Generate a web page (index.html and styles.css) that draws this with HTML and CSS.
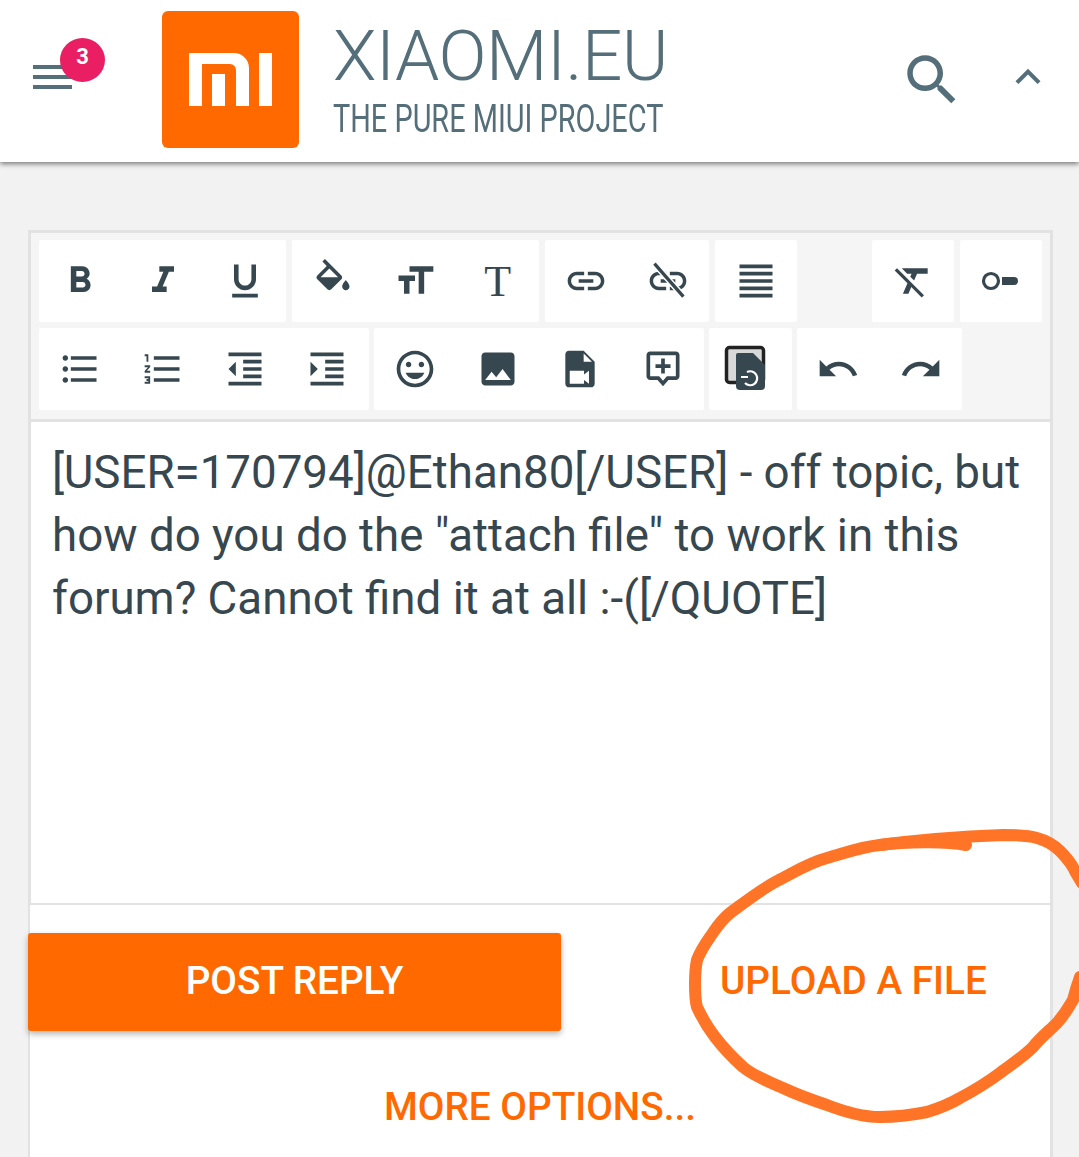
FILE: index.html
```html
<!doctype html>
<html>
    <head>
        <title>XIAOMI.EU</title>
        <meta charset="UTF-8">
        <link rel="stylesheet" href="styles.css">
    </head>

    <body>
        <!--Header Start-->
        <header class="header">
            <div class="menu">
                <span class="menu-line"></span>
                <span class="menu-line"></span>
                <span class="menu-line"></span>
                <span class="badge">3</span>
            </div>
            <svg class="logo" viewBox="0 0 137 137">
                <rect width="137" height="137" rx="6" fill="#ff6900"/>
                <path fill="#fff" d="M27 42h45a15 15 0 0 1 15 15v38H74V59a6 6 0 0 0-6-6H40v42H27zM50 63h13v32H50zM97 42h13v53H97z"/>
            </svg>
            <div class="brand">
                <div class="brand-name">XIAOMI.EU</div>
                <div class="brand-sub">THE PURE MIUI PROJECT</div>
            </div>
            <svg class="search" viewBox="0 0 24 24"><path d="M15.5 14h-.79l-.28-.27C15.41 12.59 16 11.11 16 9.5 16 5.91 13.09 3 9.5 3S3 5.91 3 9.5 5.91 16 9.5 16c1.61 0 3.09-.59 4.23-1.57l.27.28v.79l5 4.99L20.49 19l-4.99-5zm-6 0C7.01 14 5 11.99 5 9.5S7.01 5 9.5 5 14 7.01 14 9.5 11.99 14 9.5 14z"/></svg>
            <svg class="chevron" viewBox="0 0 24 24"><path d="M7.41 15.41L12 10.83l4.59 4.58L18 14l-6-6-6 6z"/></svg>
        </header>
        <!--Header End-->

        <!--Editor Start-->
        <section class="editor">
            <div class="toolbar">
                <div class="tool-row">
                    <div class="group">
                        <span class="tool"><svg viewBox="0 0 24 24"><path d="M15.6 10.79c.97-.67 1.65-1.77 1.65-2.79 0-2.26-1.75-4-4-4H7v14h7.04c2.09 0 3.71-1.7 3.71-3.79 0-1.52-.86-2.82-2.15-3.42zM10 6.5h3c.83 0 1.5.67 1.5 1.5s-.67 1.5-1.5 1.5h-3v-3zm3.5 9H10v-3h3.5c.83 0 1.5.67 1.5 1.5s-.67 1.5-1.5 1.5z"/></svg></span>
                        <span class="tool"><svg viewBox="0 0 24 24"><path d="M10 4v3h2.21l-3.42 8H6v3h8v-3h-2.21l3.42-8H18V4z"/></svg></span>
                        <span class="tool"><svg viewBox="0 0 24 24"><path d="M12 17c3.31 0 6-2.69 6-6V3h-2.5v8c0 1.93-1.57 3.5-3.5 3.5S8.5 12.93 8.5 11V3H6v8c0 3.31 2.69 6 6 6zm-7 2v2h14v-2H5z"/></svg></span>
                    </div>
                    <div class="group">
                        <span class="tool"><svg viewBox="0 0 24 24"><path d="M16.56 8.94L7.62 0 6.21 1.41l2.38 2.38-5.15 5.15c-.59.59-.59 1.54 0 2.12l5.5 5.5c.29.29.68.44 1.06.44s.77-.15 1.06-.44l5.5-5.5c.59-.58.59-1.53 0-2.12zM5.21 10L10 5.21 14.79 10H5.21zM19 11.5s-2 2.17-2 3.5c0 1.1.9 2 2 2s2-.9 2-2c0-1.33-2-3.5-2-3.5z"/></svg></span>
                        <span class="tool"><svg viewBox="0 0 24 24"><path d="M9 4v3h5v12h3V7h5V4H9zm-6 8h3v7h3v-7h3V9H3v3z"/></svg></span>
                        <span class="tool tool-serif">T</span>
                    </div>
                    <div class="group">
                        <span class="tool"><svg viewBox="0 0 24 24"><path d="M3.9 12c0-1.71 1.39-3.1 3.1-3.1h4V7H7c-2.76 0-5 2.24-5 5s2.24 5 5 5h4v-1.9H7c-1.71 0-3.1-1.39-3.1-3.1zM8 13h8v-2H8v2zm9-6h-4v1.9h4c1.71 0 3.1 1.39 3.1 3.1s-1.39 3.1-3.1 3.1h-4V17h4c2.76 0 5-2.24 5-5s-2.24-5-5-5z"/></svg></span>
                        <span class="tool"><svg viewBox="0 0 24 24"><path d="M3.9 12c0-1.71 1.39-3.1 3.1-3.1h4V7H7c-2.76 0-5 2.24-5 5s2.24 5 5 5h4v-1.9H7c-1.71 0-3.1-1.39-3.1-3.1zM8 13h8v-2H8v2zm9-6h-4v1.9h4c1.71 0 3.1 1.39 3.1 3.1s-1.39 3.1-3.1 3.1h-4V17h4c2.76 0 5-2.24 5-5s-2.24-5-5-5z"/><path fill="none" stroke="#fff" stroke-width="3.400" d="M4.600 2.500l15.800 18"/><path fill="none" stroke="#37474f" stroke-width="1.800" d="M4.600 2.500l15.800 18"/></svg></span>
                    </div>
                    <div class="group">
                        <span class="tool"><svg viewBox="0 0 24 24"><path d="M3 21h18v-2H3v2zm0-4h18v-2H3v2zm0-4h18v-2H3v2zm0-4h18V7H3v2zm0-6v2h18V3H3z"/></svg></span>
                    </div>
                    <div class="group group-push">
                        <span class="tool"><svg viewBox="0 0 24 24"><path d="M3.27 5L2 6.27l6.97 6.97L6.5 19h3l1.57-3.66L16.73 21 18 19.73 3.55 5.27 3.27 5zM6 5v.18L8.82 8h2.4l-.72 1.68 2.1 2.1L14.21 8H20V5H6z"/></svg></span>
                    </div>
                    <div class="group">
                        <span class="tool"><svg viewBox="0 0 44 44"><circle cx="12" cy="22" r="7.5" fill="none" stroke="#37474f" stroke-width="3.200"/><path d="M23 18h12a4 4 0 0 1 0 8H23z"/></svg></span>
                    </div>
                </div>
                <div class="tool-row">
                    <div class="group">
                        <span class="tool"><svg viewBox="0 0 24 24"><path d="M4 10.5c-.83 0-1.5.67-1.5 1.5s.67 1.5 1.5 1.5 1.5-.67 1.5-1.5-.67-1.5-1.5-1.5zm0-6c-.83 0-1.5.67-1.5 1.5S3.17 7.5 4 7.5 5.5 6.83 5.5 6 4.83 4.5 4 4.5zm0 12c-.83 0-1.5.68-1.5 1.5s.68 1.5 1.5 1.5 1.5-.68 1.5-1.5-.67-1.5-1.5-1.5zM7 19h14v-2H7v2zm0-6h14v-2H7v2zm0-8v2h14V5H7z"/></svg></span>
                        <span class="tool"><svg viewBox="0 0 24 24"><path d="M2 17h2v.5H3v1h1v.5H2v1h3v-4H2v1zm1-9h1V4H2v1h1v3zm-1 3h1.8L2 13.1v.9h3v-1H3.2L5 10.9V10H2v1zm5-6v2h14V5H7zm0 14h14v-2H7v2zm0-6h14v-2H7v2z"/></svg></span>
                        <span class="tool"><svg viewBox="0 0 24 24"><path d="M11 17h10v-2H11v2zm-8-5l4 4V8l-4 4zm0 9h18v-2H3v2zM3 3v2h18V3H3zm8 6h10V7H11v2zm0 4h10v-2H11v2z"/></svg></span>
                        <span class="tool"><svg viewBox="0 0 24 24"><path d="M3 21h18v-2H3v2zM3 8v8l4-4-4-4zm8 9h10v-2H11v2zM3 3v2h18V3H3zm8 6h10V7H11v2zm0 4h10v-2H11v2z"/></svg></span>
                    </div>
                    <div class="group">
                        <span class="tool"><svg viewBox="0 0 24 24"><path d="M11.99 2C6.47 2 2 6.48 2 12s4.47 10 9.99 10C17.52 22 22 17.52 22 12S17.52 2 11.99 2zM12 20c-4.42 0-8-3.58-8-8s3.58-8 8-8 8 3.58 8 8-3.58 8-8 8zm3.5-9c.83 0 1.5-.67 1.5-1.5S16.33 8 15.5 8 14 8.67 14 9.5s.67 1.5 1.5 1.5zm-7 0c.83 0 1.5-.67 1.5-1.5S9.33 8 8.5 8 7 8.67 7 9.5 7.67 11 8.5 11zm3.5 6.5c2.33 0 4.31-1.46 5.11-3.5H6.89c.8 2.04 2.78 3.5 5.11 3.5z"/></svg></span>
                        <span class="tool"><svg viewBox="0 0 24 24"><path d="M21 19V5c0-1.1-.9-2-2-2H5c-1.1 0-2 .9-2 2v14c0 1.1.9 2 2 2h14c1.1 0 2-.9 2-2zM8.5 13.5l2.5 3.01L14.5 12l4.5 6H5l3.5-4.5z"/></svg></span>
                        <span class="tool"><svg viewBox="0 0 24 24"><path d="M6 2c-1.1 0-2 .9-2 2v16c0 1.1.9 2 2 2h12c1.1 0 2-.9 2-2V8l-6-6H6zm8 1.5L18.5 8H14z"/><path fill="#fff" d="M6.4 13h7.8v2l2.7-2v7l-2.7-2v2H6.4z"/></svg></span>
                        <span class="tool"><svg viewBox="0 0 24 24"><path d="M5 2.5h14c1.1 0 2 .9 2 2V16c0 1.1-.9 2-2 2h-4l-3 3.4L9 18H5c-1.1 0-2-.9-2-2V4.500c0-1.100.9-2 2-2zm0 2V16h4.900l2.100 2.400 2.100-2.400H19V4.500zM11 6.300h2v3.100h3.100v2H13v3.100h-2v-3.100H7.900v-2H11z"/></svg></span>
                    </div>
                    <div class="group">
                        <span class="tool"><svg class="tool-stack" viewBox="0 0 44 44"><rect class="tool-ghost" x="-2.500" y="0.500" width="37" height="35" rx="3"/><path d="M9 6h15l12 12v21a4 4 0 0 1-4 4H11a4 4 0 0 1-4-4V8a2 2 0 0 1 2-2z"/><path fill="none" stroke="#fff" stroke-width="2.200" d="M12 30h7M18 25a7 7 0 1 1-2 11"/></svg></span>
                    </div>
                    <div class="group">
                        <span class="tool"><svg viewBox="0 0 24 24"><path d="M12.500 8c-2.650 0-5.050.99-6.900 2.600L2 7v9h9l-3.620-3.620c1.390-1.160 3.160-1.880 5.120-1.880 3.540 0 6.550 2.310 7.600 5.500l2.370-.78C21.080 11.030 17.150 8 12.500 8z"/></svg></span>
                        <span class="tool"><svg viewBox="0 0 24 24"><path d="M18.400 10.600C16.550 8.990 14.150 8 11.500 8c-4.650 0-8.580 3.030-9.960 7.220L3.900 16c1.050-3.190 4.050-5.500 7.600-5.500 1.950 0 3.730.72 5.120 1.880L13 16h9V7l-3.600 3.600z"/></svg></span>
                    </div>
                </div>
            </div>
            <div class="message">[USER=170794]@Ethan80[/USER] - off topic, but how do you do the "attach file" to work in this forum? Cannot find it at all :-([/QUOTE]</div>
        </section>

        <section class="actions">
            <div class="action-row">
                <button class="post-btn">POST REPLY</button>
                <a class="link upload-link">UPLOAD A FILE</a>
            </div>
            <a class="link more-link">MORE OPTIONS...</a>
        </section>
        <!--Editor End-->

        <!--Hand drawn circle lying over the page-->
        <svg class="scribble" viewBox="0 0 1079 1157">
            <path d="M966 845C950 842 910 841 880 845C860 847 845 853 827 858C808 863 795 872 777 881C760 890 745 902 730 913C720 921 715 930 710 937C703 947 700 952 697 960C695 970 695 975 695 983C695 992 695 1000 697 1007C703 1020 708 1028 715 1037C725 1050 733 1058 743 1067C755 1077 768 1081 783 1088C798 1095 812 1100 827 1105C845 1112 865 1117 880 1117C898 1117 912 1115 927 1112C940 1108 950 1104 960 1098C975 1090 988 1082 1000 1073C1012 1064 1023 1057 1033 1047C1040 1038 1050 1030 1057 1023C1066 1013 1070 1005 1073 1000C1075 992 1077 985 1080 977"/>
            <path d="M880 845C910 841 950 837 1003 835C1015 835 1027 835 1037 838C1048 841 1054 845 1060 851C1068 859 1072 864 1076 873L1082 883"/>
        </svg>
    </body>
</html>
```

FILE: styles.css
```css
body{
    margin: 0;
    height: 1157px;
    overflow: hidden;
    position: relative;
    font-family: Roboto, "Liberation Sans", sans-serif;
    background: #F2F2F2;
}

/* Header */
.header{
    display: flex;
    align-items: center;
    height: 162px;
    background: white;
    box-shadow: 0 2px 5px rgba(0,0,0,0.5);
}

.menu{
    position: relative;
    display: flex;
    flex-direction: column;
    gap: 6px;
    width: 39px;
    margin-left: 33px;
    margin-top: -8px;
}
.menu-line{
    height: 4px;
    background: #546E7A;
}
.badge{
    position: absolute;
    left: 27px;
    top: -27px;
    width: 45px;
    height: 44px;
    border-radius: 50%;
    background: #E91E63;
    color: white;
    font-size: 22px;
    font-weight: 700;
    line-height: 38px;
    text-align: center;
}

.logo{
    width: 137px;
    height: 137px;
    margin-left: 90px;
    margin-top: -3px;
}

.brand{
    margin-left: 34px;
    margin-top: -5px;
    color: #546E7A;
}
.brand-name{
    font-size: 71px;
    font-weight: 300;
    line-height: 80px;
    letter-spacing: -0.5px;
}
.brand-sub{
    font-size: 38px;
    font-weight: 400;
    line-height: 44px;
    margin-top: 1px;
    width: 420px;
    transform: scaleX(0.76);
    transform-origin: left;
    white-space: nowrap;
}

.search{
    width: 66px;
    height: 66px;
    margin-left: auto;
    margin-top: -2px;
    fill: #546E7A;
}
.chevron{
    width: 50px;
    height: 50px;
    margin-left: 38px;
    margin-right: 26px;
    margin-top: -8px;
    fill: #546E7A;
}

/* Editor */
.editor{
    width: 1019px;
    margin: 68px 0 0 28px;
    border: 3px solid #E2E2E2;
    border-bottom-width: 2px;
    background: #F5F5F5;
}

.toolbar{
    display: flex;
    flex-direction: column;
    gap: 6px;
    padding: 7px 8px 9px;
}
.tool-row{
    display: flex;
    gap: 5.6px;
}
.group{
    display: flex;
    background: white;
    border-radius: 2px;
}
.group-push{
    margin-left: 69px;
}
.tool{
    display: flex;
    align-items: center;
    justify-content: center;
    width: 82.4px;
    height: 82px;
    color: #37474F;
}
.tool svg{
    width: 44px;
    height: 44px;
    fill: #37474F;
}
.tool-serif{
    font-family: "Liberation Serif", serif;
    font-size: 44px;
}
.tool .tool-stack{
    overflow: visible;
}
.tool-ghost{
    fill: #D8D8D8;
    stroke: #222;
    stroke-width: 3.5;
    filter: blur(0.6px);
}

.message{
    height: 484px;
    box-sizing: border-box;
    border-top: 3px solid #E2E2E2;
    padding: 19px 20px 0 21px;
    background: white;
    color: #37474F;
    font-size: 45.7px;
    line-height: 63px;
}

/* Actions */
.actions{
    box-sizing: border-box;
    width: 1025px;
    height: 260px;
    margin-left: 28px;
    padding-top: 28px;
    border-left: 2px solid #E2E2E2;
    border-right: 3px solid #E2E2E2;
    background: white;
    text-align: center;
}
.action-row{
    display: flex;
    align-items: center;
    margin-left: -2px;
    margin-bottom: 53px;
}
.post-btn{
    width: 533px;
    height: 98px;
    padding: 0 0 4px;
    border: none;
    border-radius: 3px;
    background: #FF6900;
    color: white;
    font-family: inherit;
    font-size: 38.7px;
    font-weight: 500;
    box-shadow: 0 3px 6px rgba(0,0,0,0.3);
}
.link{
    color: #FF6900;
    font-size: 38.7px;
    font-weight: 500;
}
.upload-link{
    margin-left: 159px;
    margin-bottom: 4px;
}

.scribble{
    position: absolute;
    left: 0;
    top: 0;
    width: 1079px;
    height: 1157px;
    fill: none;
    stroke: #FF7426;
    stroke-width: 12;
    stroke-linecap: round;
    pointer-events: none;
}
```
